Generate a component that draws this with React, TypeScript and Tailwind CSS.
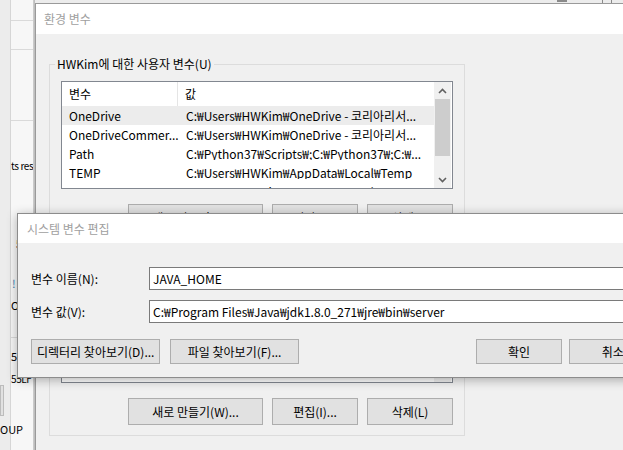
import React from 'react'

const W = '\u20A9'

const userVars: [string, string][] = [
  ['OneDrive', `C:${W}Users${W}HWKim${W}OneDrive - 코리아리서...`],
  ['OneDriveCommer...', `C:${W}Users${W}HWKim${W}OneDrive - 코리아리서...`],
  ['Path', `C:${W}Python37${W}Scripts${W};C:${W}Python37${W};C:${W}...`],
  ['TEMP', `C:${W}Users${W}HWKim${W}AppData${W}Local${W}Temp`],
  ['TMP', `C:${W}Users${W}HWKim${W}AppData${W}Local${W}Temp`],
]

const systemVars: [string, string][] = [
  ['ComSpec', `C:${W}WINDOWS${W}system32${W}cmd.exe`],
  ['DriverData', `C:${W}Windows${W}System32${W}Drivers${W}DriverData`],
  ['JAVA_HOME', `C:${W}Program Files${W}Java${W}jdk1.8.0_271`],
  ['NUMBER_OF_P...', '4'],
]

function WinButton({ label, w }: { label: string; w: string }) {
  return (
    <div
      className={`${w} h-[27px] shrink-0 flex items-center justify-center border border-[#adadad] bg-[#e1e1e1] text-[12px] leading-none text-black`}
    >
      {label}
    </div>
  )
}

function Chevron({ up }: { up?: boolean }) {
  return (
    <svg width="9" height="6" viewBox="0 0 9 6" className="block">
      <path
        d={up ? 'M1 5 L4.5 1.5 L8 5' : 'M1 1 L4.5 4.5 L8 1'}
        fill="none"
        stroke="#606060"
        strokeWidth="1.6"
      />
    </svg>
  )
}

function VarList({ rows, h }: { rows: [string, string][]; h: string }) {
  return (
    <div className={`mt-[9px] ml-[11px] w-[392px] ${h} border border-[#828790] bg-white flex overflow-hidden`}>
      <div className="flex-1 flex flex-col overflow-hidden">
        <div className="h-[24px] shrink-0 flex text-[12px] leading-none">
          <div className="w-[116px] pl-[7px] flex items-center border-r border-[#e5e5e5]">변수</div>
          <div className="flex-1 pl-[7px] flex items-center">값</div>
        </div>
        {rows.map(([name, value], i) => (
          <div
            key={name}
            className={`h-[19px] shrink-0 flex items-center text-[12px] leading-none whitespace-nowrap ${
              i === 0 ? 'bg-[#ececec]' : ''
            }`}
          >
            <div className="w-[117px] pl-[7px]">{name}</div>
            <div className="flex-1 pl-[7px] overflow-hidden">{value}</div>
          </div>
        ))}
      </div>
      <div className="w-[17px] mr-[1px] shrink-0 flex flex-col bg-[#f0f0f0]">
        <div className="h-[17px] flex items-center justify-center">
          <Chevron up />
        </div>
        <div className="h-[57px] mx-[1px] bg-[#cdcdcd]" />
        <div className="flex-1" />
        <div className="h-[17px] flex items-center justify-center">
          <Chevron />
        </div>
      </div>
    </div>
  )
}

function GroupBox({
  legend,
  listH,
  className,
  rows,
}: {
  legend: string
  listH: string
  className: string
  rows: [string, string][]
}) {
  return (
    <fieldset className={`${className} ml-[13px] w-[416px] border border-[#dcdcdc] pb-[10px]`}>
      <legend className="ml-[5px] px-[2px] h-[16px] text-[12px] leading-[16px]">{legend}</legend>
      <VarList rows={rows} h={listH} />
      <div className="mt-[15px] ml-[78px] flex gap-[9px]">
        <WinButton label="새로 만들기(W)..." w="w-[135px]" />
        <WinButton label="편집(I)..." w="w-[86px]" />
        <WinButton label="삭제(L)" w="w-[86px]" />
      </div>
    </fieldset>
  )
}

export default function App() {
  return (
    <div className="relative w-[623px] h-[450px] overflow-hidden bg-[#ececec] font-['Noto_Sans_CJK_KR',sans-serif] text-black">
      {/* window behind, left strip */}
      <div className="absolute left-[10px] top-0 w-[25px] h-[450px] border-l border-[#d6d6d6] bg-[#f7f7f7] overflow-hidden text-[11px] leading-none">
        <div className="h-[21px] border-b border-[#dadada]" />
        <div className="h-[29px] border-b border-[#dadada]" />
        <div className="h-[71px] border-b border-[#dadada]" />
        <div className="mt-[40px] whitespace-nowrap text-[10px] tracking-[-0.4px]">ts res</div>
        <div className="mt-[67px] ml-[5px]">5</div>
        <div className="mt-[29px] ml-[1px] text-[#3c7fb1]">!</div>
        <div className="mt-[11px]">O</div>
        <div className="mt-[26px] border-t border-[#dadada]" />
        <div className="mt-[13px] whitespace-nowrap">55</div>
        <div className="mt-[12px] whitespace-nowrap text-[10px] tracking-[-0.4px]">55LF</div>
      </div>
      <div className="absolute left-0 top-[385px] w-[4px] h-[31px] border border-[#bcbcbc] bg-[#e1e1e1]" />
      <div className="absolute left-0 top-[424px] text-[11px] leading-none">OUP</div>
      <div className="absolute left-[33px] top-0 w-[2px] h-[450px] bg-gradient-to-r from-[#d0d0d0] to-[#b8b8b8]" />

      {/* top strip of another window */}
      <div className="absolute left-[557px] top-0 w-[10px] h-[2px] bg-[#8a8a8a]" />
      <div className="absolute left-[602px] top-0 w-px h-[3px] bg-[#8a8a8a]" />
      <div className="absolute left-[611px] top-0 w-px h-[3px] bg-[#8a8a8a]" />

      {/* 환경 변수 */}
      <div className="absolute left-[35px] top-[3px] w-[620px] h-[470px] border border-[#9a9a9a] bg-[#f0f0f0] flex flex-col">
        <div className="h-[30px] shrink-0 bg-white pl-[8px] flex items-center text-[12px] leading-none text-[#a0a0a0]">
          환경 변수
        </div>
        <GroupBox className="mt-[22px]" legend="HWKim에 대한 사용자 변수(U)" listH="h-[108px]" rows={userVars} />
        <GroupBox className="mt-[10px]" legend="시스템 변수(S)" listH="h-[106px]" rows={systemVars} />
      </div>

      {/* 시스템 변수 편집 */}
      <div className="absolute left-[17px] top-[213px] w-[640px] h-[165px] border border-[#8c8c8c] bg-[#f0f0f0] shadow-[0_2px_10px_rgba(0,0,0,0.3)] flex flex-col">
        <div className="h-[29px] shrink-0 bg-white pl-[9px] flex items-center text-[12px] leading-none text-[#a0a0a0]">
          시스템 변수 편집
        </div>
        <div className="pl-[13px] pt-[24px] flex flex-col text-[12px] leading-none">
          <div className="flex items-center">
            <div className="w-[118px]">변수 이름(N):</div>
            <div className="w-[500px] h-[23px] border border-[#7a7a7a] bg-white pl-[3px] flex items-center">
              JAVA_HOME
            </div>
          </div>
          <div className="mt-[10px] flex items-center">
            <div className="w-[118px]">변수 값(V):</div>
            <div className="w-[500px] h-[23px] border border-[#7a7a7a] bg-white pl-[3px] flex items-center whitespace-nowrap">
              {`C:${W}Program Files${W}Java${W}jdk1.8.0_271${W}jre${W}bin${W}server`}
            </div>
          </div>
          <div className="mt-[16px] flex">
            <div className="w-[130px] h-[25px] flex items-center justify-center border border-[#adadad] bg-[#e1e1e1]">
              디렉터리 찾아보기(D)...
            </div>
            <div className="ml-[10px] w-[129px] h-[25px] flex items-center justify-center border border-[#adadad] bg-[#e1e1e1]">
              파일 찾아보기(F)...
            </div>
            <div className="ml-[177px] w-[87px] h-[25px] flex items-center justify-center border border-[#adadad] bg-[#e1e1e1]">
              확인
            </div>
            <div className="ml-[7px] w-[87px] h-[25px] flex items-center justify-center border border-[#adadad] bg-[#e1e1e1]">
              취소
            </div>
          </div>
        </div>
      </div>
    </div>
  )
}
